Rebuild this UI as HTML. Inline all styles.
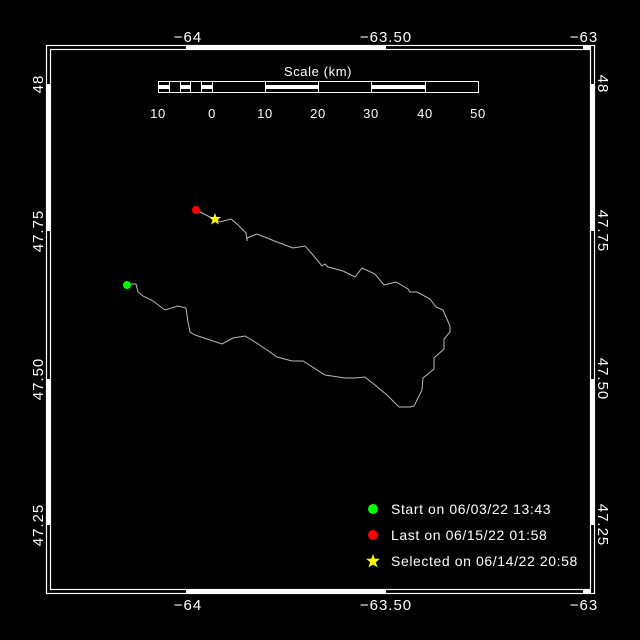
<!DOCTYPE html>
<html><head><style>html,body{margin:0;padding:0;background:#000;width:640px;height:640px;overflow:hidden}</style></head>
<body>
<svg width="640" height="640" xmlns="http://www.w3.org/2000/svg" style="display:block">
<rect width="640" height="640" fill="#000"/>
<g fill="none" stroke="#fff" stroke-width="1.2">
<rect x="46.5" y="45.5" width="548" height="548"/>
<rect x="50.5" y="49.5" width="540" height="540"/>
</g>
<g fill="#fff">
<rect x="186" y="45" width="200" height="5"/>
<rect x="583" y="45" width="8" height="5"/>
<rect x="186" y="589" width="200" height="5"/>
<rect x="583" y="589" width="8" height="5"/>
<rect x="46" y="84" width="5" height="147"/>
<rect x="46" y="379" width="5" height="146"/>
<rect x="590" y="84" width="5" height="147"/>
<rect x="590" y="379" width="5" height="146"/>
</g>
<g fill="#fff" font-family="Liberation Sans, sans-serif" font-size="15" letter-spacing="1" text-anchor="middle">
<text x="188" y="42">−64</text>
<text x="386" y="42">−63.50</text>
<text x="584" y="42">−63</text>
<text x="188" y="610">−64</text>
<text x="386" y="610">−63.50</text>
<text x="584" y="610">−63</text>
<text transform="translate(43,84) rotate(-90)">48</text>
<text transform="translate(43,231) rotate(-90)">47.75</text>
<text transform="translate(43,379) rotate(-90)">47.50</text>
<text transform="translate(43,525) rotate(-90)">47.25</text>
<text transform="translate(598,84) rotate(90)">48</text>
<text transform="translate(598,231) rotate(90)">47.75</text>
<text transform="translate(598,379) rotate(90)">47.50</text>
<text transform="translate(598,525) rotate(90)">47.25</text>
</g>
<g stroke="#fff" stroke-width="1" fill="none">
<rect x="158.5" y="81.5" width="320" height="11"/>
<path d="M169.5 81v11M180.5 81v11M190.5 81v11M201.5 81v11M212.5 81v11M265.5 81v11M318.5 81v11M371.5 81v11M425.5 81v11"/>
</g>
<g fill="#fff">
<rect x="158" y="85" width="11" height="4"/>
<rect x="180" y="85" width="10" height="4"/>
<rect x="201" y="85" width="11" height="4"/>
<rect x="265" y="85" width="53" height="4"/>
<rect x="371" y="85" width="54" height="4"/>
</g>
<g fill="#fff" font-family="Liberation Sans, sans-serif" font-size="13" letter-spacing="0.6" text-anchor="middle">
<text x="318" y="76">Scale (km)</text>
<text x="158" y="118">10</text>
<text x="212" y="118">0</text>
<text x="265" y="118">10</text>
<text x="318" y="118">20</text>
<text x="371" y="118">30</text>
<text x="425" y="118">40</text>
<text x="478" y="118">50</text>
</g>
<polyline fill="none" stroke="#bbb" stroke-width="1" points="196,210 200,212 210,217 215,219 220,222 231,219 237,224 246,233 247,241 247,238 257,234 267,238 277,242 293,248 305,246 313,255 322,266 325,264 328,267 343,271 355,277 362,268 375,274 384,285 396,282 408,289 410,292 417,292 430,299 436,307 443,310 450,326 450,332 444,339 444,349 434,358 434,369 423,378 422,390 417,400 414,406 410,407 399,407 387,395 375,385 365,377 355,378 345,378 325,375 303,361 292,361 277,357 267,350 255,342 245,336 233,338 222,344 207,339 195,335 190,332 188,322 186,308 178,306 165,310 153,301 143,296 138,292 136,284 132,284 127,285"/>
<circle cx="127" cy="285" r="4" fill="#0f0"/>
<circle cx="196" cy="210" r="4" fill="#f00"/>
<polygon fill="#ff0" transform="translate(215,219)" points="0,-6 1.5,-2 6,-2 2.5,1 4,5.5 0,3 -4,5.5 -2.5,1 -6,-2 -1.5,-2"/>
<circle cx="373" cy="509" r="5" fill="#0f0"/>
<circle cx="373" cy="535" r="5" fill="#f00"/>
<polygon fill="#ff0" transform="translate(373,561)" points="0,-7 1.7,-2.3 7,-2.3 2.8,1.2 4.5,6.5 0,3.5 -4.5,6.5 -2.8,1.2 -7,-2.3 -1.7,-2.3"/>
<g fill="#fff" font-family="Liberation Sans, sans-serif" font-size="14" letter-spacing="0.6">
<text x="391" y="514">Start on 06/03/22 13:43</text>
<text x="391" y="540">Last on 06/15/22 01:58</text>
<text x="391" y="566">Selected on 06/14/22 20:58</text>
</g>
</svg>
</body></html>
